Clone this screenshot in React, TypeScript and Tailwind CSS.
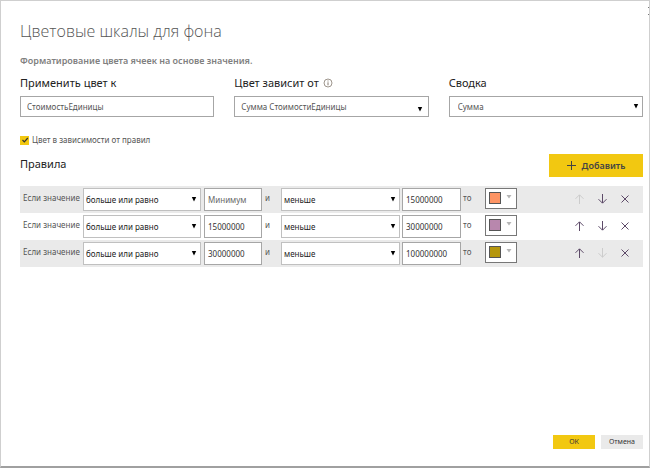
import { useState } from 'react';
import type { ReactNode } from 'react';

type Rule = { id: number; from: string; to: string; color: string };

const initialRules: Rule[] = [
  { id: 1, from: '', to: '15000000', color: '#fd9464' },
  { id: 2, from: '15000000', to: '30000000', color: '#b887ad' },
  { id: 3, from: '30000000', to: '100000000', color: '#b5960c' },
];

function Dropdown({ id, label, options, className, arrow }: {
  id?: string; label?: string; options: string[]; className: string; arrow: string;
}) {
  return (
    <div className="relative min-w-0">
      <select id={id} aria-label={label} className={`block w-full appearance-none border bg-white outline-none ${className}`}>
        {options.map((o) => <option key={o}>{o}</option>)}
      </select>
      <svg viewBox="0 0 6 5" className={`pointer-events-none absolute h-[5px] w-1.5 fill-black ${arrow}`} aria-hidden="true">
        <path d="M0.8 0h4.4L3 4.6z" />
      </svg>
    </div>
  );
}

function IconButton({ label, disabled, onClick, children }: {
  label: string; disabled?: boolean; onClick: () => void; children: ReactNode;
}) {
  return (
    <button type="button" aria-label={label} disabled={disabled} onClick={onClick}
      className="flex size-3 items-center justify-center text-[#5d4a68] disabled:text-[#cccccc]">
      <svg viewBox="0 0 12 12" className="size-3 fill-none stroke-current" strokeWidth="1" aria-hidden="true">{children}</svg>
    </button>
  );
}

const valueBox = 'h-[23px] min-w-0 shrink-0 border border-[#a6a6a6] bg-white px-[3px] text-[8px] text-[#333] outline-none placeholder:text-[#666]';
const ruleSelect = 'h-[23px] border-[#c0c0c0] px-0.5 text-[8px] text-[#222]';
const fieldLabel = 'flex h-5 items-center gap-1 text-[11px] text-[#222]';

export default function App() {
  const [rules, setRules] = useState(initialRules);

  const move = (index: number, step: number) => {
    const next = [...rules];
    [next[index], next[index + step]] = [next[index + step], next[index]];
    setRules(next);
  };
  const add = () => setRules([...rules, { id: Date.now(), from: '', to: '', color: '#fd9464' }]);

  return (
    <main className="relative flex min-h-screen flex-col overflow-hidden border border-b-2 border-[#cfcfcf] border-b-[#a0a0a0] bg-white pr-1.5 pl-[19px] font-['Noto_Sans','Open_Sans',sans-serif] text-[#555]">
      <button type="button" aria-label="Закрыть" className="absolute top-1 -right-2.5 text-[#777]">
        <svg viewBox="0 0 12 12" className="size-3 fill-none stroke-current"><path d="M1 2l8 8M9 2l-8 8" /></svg>
      </button>

      <h1 className="mt-4 font-['Open_Sans','Noto_Sans',sans-serif] text-[16px] leading-7 font-light text-[#555]">Цветовые шкалы для фона</h1>
      <p className="mt-2 text-[9px] leading-4 font-semibold text-[#808080]">Форматирование цвета ячеек на основе значения.</p>

      <section className="mt-1 grid grid-cols-3 gap-5">
        <div>
          <label htmlFor="target" className={fieldLabel}>Применить цвет к</label>
          <input id="target" defaultValue="СтоимостьЕдиницы" className="mt-[3px] block h-[21px] w-full border border-[#a6a6a6] px-1.5 text-[8px] text-[#555] outline-none" />
        </div>
        <div>
          <div className={fieldLabel}>
            <label htmlFor="source">Цвет зависит от</label>
            <svg viewBox="0 0 10 10" className="size-2.5 fill-none stroke-[#857b70]" aria-hidden="true">
              <circle cx="5" cy="5" r="4" strokeWidth="0.8" /><path d="M5 4.3v3M5 2.5v1" />
            </svg>
          </div>
          <div className="mt-[3px]">
            <Dropdown id="source" options={['Сумма СтоимостиЕдиницы']} className="h-[21px] border-[#a6a6a6] px-1.5 text-[8px] text-[#555]" arrow="top-[11px] right-1.5" />
          </div>
        </div>
        <div>
          <label htmlFor="summary" className={fieldLabel}>Сводка</label>
          <div className="mt-[3px]">
            <Dropdown id="summary" options={['Сумма']} className="h-[21px] border-[#a6a6a6] px-2 text-[8px] text-[#555]" arrow="top-2 right-1" />
          </div>
        </div>
      </section>

      <label className="mt-[15px] flex h-4 items-center gap-[3px] self-start text-[8px]">
        <span className="grid size-[9px] place-items-center">
          <input type="checkbox" defaultChecked className="peer col-start-1 row-start-1 size-[9px] appearance-none bg-[#ddd] checked:bg-[#f2c811]" />
          <svg viewBox="0 0 8 8" className="pointer-events-none invisible col-start-1 row-start-1 size-2 fill-none stroke-[#333] peer-checked:visible" strokeWidth="1.2"><path d="M1.5 4l1.8 1.8L6.8 2" /></svg>
        </span>
        Цвет в зависимости от правил
      </label>

      <div className="mt-1.5 flex items-start justify-between">
        <h2 className="text-[11px] leading-5 text-[#222]">Правила</h2>
        <button type="button" onClick={add} className="flex h-[23px] w-[94px] items-center justify-center gap-1.5 bg-[#f2c811] text-[9px] font-semibold text-[#444]">
          <svg viewBox="0 0 9 9" className="size-[9px] fill-none stroke-current" aria-hidden="true"><path d="M4.5 0v9M0 4.5h9" /></svg>
          Добавить
        </button>
      </div>

      <ul className="mt-[9px] text-[8px]">
        {rules.map((rule, i) => (
          <li key={rule.id} className="flex h-[27px] items-center pl-[3px] odd:bg-[#eaeaea]">
            <span className="w-[60px] shrink-0 pb-1 whitespace-nowrap">Если значение</span>
            <div className="w-[118px]"><Dropdown label="Нижнее условие" options={['больше или равно', 'больше']} className={ruleSelect} arrow="top-[9px] right-1" /></div>
            <input aria-label="Нижняя граница" placeholder="Минимум" defaultValue={rule.from} className={`ml-[3px] w-[58px] ${valueBox}`} />
            <span className="w-[19px] shrink-0 pb-1 pl-[3px]">и</span>
            <div className="w-[119px]"><Dropdown label="Верхнее условие" options={['меньше', 'меньше или равно']} className={ruleSelect} arrow="top-[9px] right-1" /></div>
            <input aria-label="Верхняя граница" defaultValue={rule.to} className={`ml-0.5 w-[59px] ${valueBox}`} />
            <span className="w-6 shrink-0 pb-1 pl-0.5">то</span>
            <button type="button" aria-label="Цвет" className="mb-0.5 flex h-[21px] w-8 shrink-0 items-center justify-between border border-[#777] bg-white pr-1 pb-0.5 pl-[3px]">
              <svg viewBox="0 0 12 12" className="size-3" aria-hidden="true"><rect x="0.5" y="0.5" width="11" height="11" fill={rule.color} stroke="#555" /></svg>
              <svg viewBox="0 0 6 4" className="mb-0.5 h-1 w-1.5 fill-[#b5b5b5]" aria-hidden="true"><path d="M0.5 0h5L3 3.5z" /></svg>
            </button>
            <div className="mr-3 ml-auto flex gap-[11px] pb-0.5">
              <IconButton label="Вверх" disabled={i === 0} onClick={() => move(i, -1)}><path d="M6.5 11V2M2.5 5.8l4-4 4 4" /></IconButton>
              <IconButton label="Вниз" disabled={i === rules.length - 1} onClick={() => move(i, 1)}><path d="M6.5 1v9M2.5 6.2l4 4 4-4" /></IconButton>
              <IconButton label="Удалить" onClick={() => setRules(rules.filter((r) => r.id !== rule.id))}><path d="M2.5 2.5l7 7M9.5 2.5l-7 7" /></IconButton>
            </div>
          </li>
        ))}
      </ul>

      <footer className="mt-auto mb-[17px] flex justify-end gap-1.5 text-[7px] text-[#333]">
        <button type="button" className="h-3.5 w-[42px] bg-[#f2c811]">ОК</button>
        <button type="button" className="h-3.5 w-[42px] bg-[#eaeaea]">Отмена</button>
      </footer>
    </main>
  );
}
